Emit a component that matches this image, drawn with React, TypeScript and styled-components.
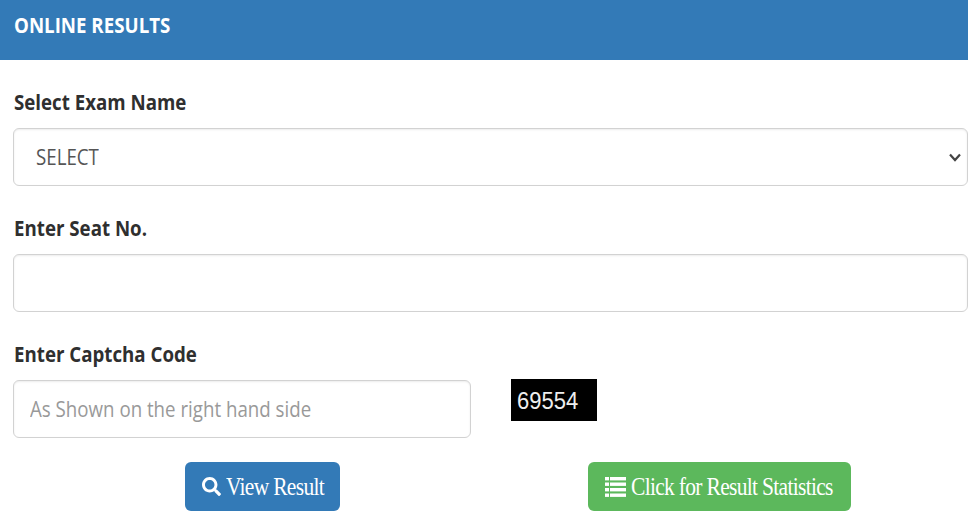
import React from "react";
import styled, { createGlobalStyle } from "styled-components";
import { FaSearch } from "react-icons/fa";

const Global = createGlobalStyle`
  html, body { margin: 0; padding: 0; background: #fff; }
  body { width: 968px; height: 520px; overflow: hidden; font-family: "Open Sans", "Noto Sans", sans-serif; }
`;

const Squeezed = styled.span`
  display: inline-block;
  white-space: nowrap;
  transform: scaleX(0.85);
  transform-origin: left center;
`;

const Header = styled.div`
  height: 60px;
  background: #337ab7;
  display: flex;
  align-items: center;
  padding: 0 0 12px 14px;
  box-sizing: border-box;
  color: #fff;
  font-size: 22px;
  font-weight: 700;
`;

const Form = styled.form`
  padding: 28px 0 0 13px;
  display: flex;
  flex-direction: column;
`;

const Label = styled.label`
  display: block;
  height: 40px;
  padding-left: 1px;
  color: #2f2f2f;
  font-size: 22px;
  line-height: 26px;
  font-weight: 700;
`;

const Field = styled.div<{ $width?: number }>`
  width: ${({ $width }) => ($width ? `${$width}px` : "auto")};
  height: 58px;
  box-sizing: border-box;
  border: 1.5px solid #d2d2d2;
  border-radius: 6px;
  box-shadow: inset 0 1px 2px rgba(0, 0, 0, 0.08);
  display: flex;
  align-items: center;
  justify-content: space-between;
  padding: 0 6px 2px 22px;
  font-size: 22px;
  color: #555;
  background: #fff;
`;

const Placeholder = styled(Squeezed)`
  color: #999;
  margin-left: -6px;
  margin-bottom: 1px;
`;

const Group = styled.div`
  height: 126px;
`;

const CaptchaRow = styled.div`
  display: flex;
  gap: 40px;
  align-items: flex-start;
`;

const Captcha = styled.div`
  width: 86px;
  height: 42px;
  margin-top: -1px;
  background: #000;
  padding-left: 6px;
  box-sizing: border-box;
`;

const CaptchaText = styled.span`
  display: inline-block;
  color: #eee;
  font-family: "Liberation Sans", sans-serif;
  font-size: 22px;
  line-height: 44px;
  transform: scaleY(1.1);
`;

const Buttons = styled.div`
  display: flex;
  gap: 248px;
  padding: 24px 0 0 172px;
`;

const Button = styled.button<{ $color: string; $width: number }>`
  width: ${({ $width }) => $width}px;
  height: 49px;
  border: none;
  border-radius: 6px;
  background: ${({ $color }) => $color};
  color: #fff;
  display: flex;
  align-items: center;
  justify-content: center;
  gap: 5px;
  padding: 0;
`;

const ButtonText = styled.span<{ $width: number }>`
  display: inline-block;
  width: ${({ $width }) => $width}px;
  font-family: "Liberation Serif", serif;
  font-size: 25px;
  letter-spacing: -0.8px;
  white-space: nowrap;
  text-align: left;
  transform: scaleX(0.86);
  transform-origin: left center;
`;

const ChevronIcon = styled.svg`
  margin-top: 2px;
`;

const Chevron = () => (
  <ChevronIcon width="12" height="9" viewBox="0 0 12 9">
    <polyline points="1,1.5 6,7 11,1.5" fill="none" stroke="#444" strokeWidth="2.2" />
  </ChevronIcon>
);

const ListIcon = () => (
  <svg width="21" height="20" viewBox="0 0 21 20" fill="currentColor">
    <rect x="0" y="0" width="4" height="3.4" />
    <rect x="5" y="0" width="16" height="3.4" />
    <rect x="0" y="5.5" width="4" height="3.4" />
    <rect x="5" y="5.5" width="16" height="3.4" />
    <rect x="0" y="11" width="4" height="3.4" />
    <rect x="5" y="11" width="16" height="3.4" />
    <rect x="0" y="16.5" width="4" height="3.4" />
    <rect x="5" y="16.5" width="16" height="3.4" />
  </svg>
);

const App = () => (
  <>
    <Global />
    <Header>
      <Squeezed>ONLINE RESULTS</Squeezed>
    </Header>
    <Form>
      <Group>
        <Label>
          <Squeezed>Select Exam Name</Squeezed>
        </Label>
        <Field>
          <Squeezed>SELECT</Squeezed>
          <Chevron />
        </Field>
      </Group>
      <Group>
        <Label>
          <Squeezed>Enter Seat No.</Squeezed>
        </Label>
        <Field />
      </Group>
      <Label>
        <Squeezed>Enter Captcha Code</Squeezed>
      </Label>
      <CaptchaRow>
        <Field $width={458}>
          <Placeholder>As Shown on the right hand side</Placeholder>
        </Field>
        <Captcha>
          <CaptchaText>69554</CaptchaText>
        </Captcha>
      </CaptchaRow>
      <Buttons>
        <Button $color="#337ab7" $width={155} type="button">
          <FaSearch size={19} />
          <ButtonText $width={98}>View Result</ButtonText>
        </Button>
        <Button $color="#5cb85c" $width={263} type="button">
          <ListIcon />
          <ButtonText $width={203}>Click for Result Statistics</ButtonText>
        </Button>
      </Buttons>
    </Form>
  </>
);

export default App;
